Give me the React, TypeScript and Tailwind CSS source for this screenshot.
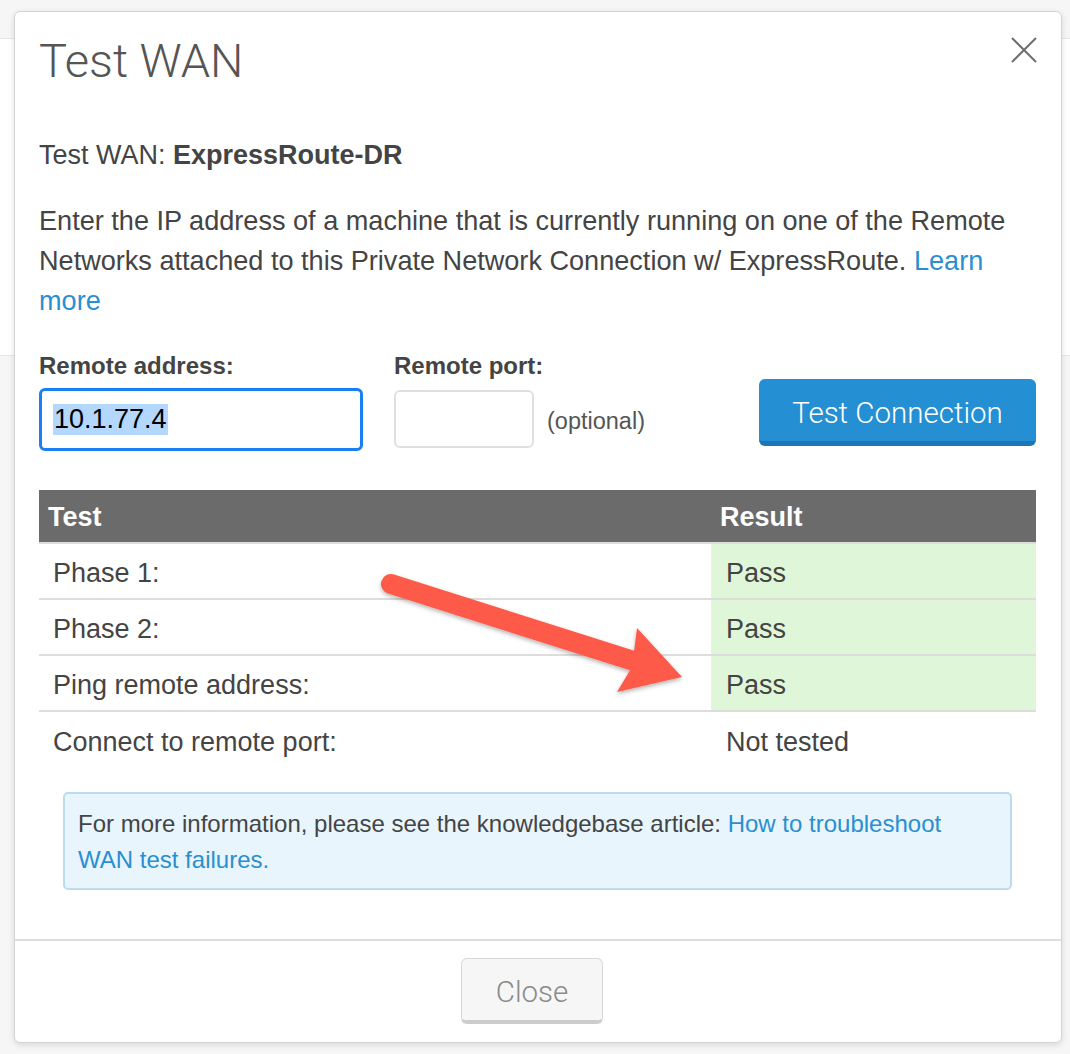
import React from "react";

const font = { fontFamily: '"Liberation Sans", Arial, sans-serif' };
const light = { fontFamily: 'Roboto, "Liberation Sans", sans-serif', fontWeight: 300 };

function Row({ label, result, pass, last }: { label: string; result: string; pass?: boolean; last?: boolean }) {
  return (
    <div className={`flex h-[56px] ${last ? "" : "border-b-2 border-[#dddddd]"}`}>
      <div className="w-[672px] pl-[14px] pt-[4px] flex items-center">{label}</div>
      <div className={`flex-1 pl-[15px] pt-[4px] flex items-center ${pass ? "bg-[#dff7d8]" : ""}`}>{result}</div>
    </div>
  );
}

export default function App() {
  return (
    <div className="relative w-[1070px] h-[1054px] bg-[#f6f6f6] overflow-hidden text-[#444444]" style={font}>
      <div className="absolute left-0 top-[38px] w-[14px] h-[318px] bg-white border-t border-b border-[#e6e6e6]" />
      <div className="absolute right-0 top-[38px] w-[10px] h-[318px] bg-white border-t border-b border-[#e6e6e6]" />
      <div className="pt-[11px] pl-[14px]">
        <div className="relative w-[1048px] h-[1032px] bg-white rounded-[6px] border border-[#d4d4d4] shadow-[0_2px_6px_rgba(0,0,0,0.12)] flex flex-col">
          <div className="flex justify-between items-start pl-[24px] pr-[24px] pt-[21px]">
            <div className="text-[47px] leading-[56px] text-[#555555]" style={light}>Test WAN</div>
            <svg width="26" height="26" viewBox="0 0 26 26" className="mt-[4px]">
              <path d="M1 1 L25 25 M25 1 L1 25" stroke="#6f6f6f" strokeWidth="2" />
            </svg>
          </div>
          <div className="pl-[24px] pr-[25px]">
            <div className="mt-[50px] text-[27px] leading-[32px]">
              Test WAN: <span className="font-bold">ExpressRoute-DR</span>
            </div>
            <div className="mt-[30px] pr-[22px] text-[27.1px] leading-[40px]">
              Enter the IP address of a machine that is currently running on one of the Remote Networks attached to this Private Network Connection w/ ExpressRoute.{" "}
              <span className="text-[#2a8fd0]">Learn more</span>
            </div>
            <div className="mt-[31px] flex items-start">
              <div className="flex flex-col">
                <div className="text-[24px] leading-[28px] font-bold">Remote address:</div>
                <div className="mt-[8px] w-[324px] h-[63px] rounded-[6px] border-[3px] border-[#1a7ef5] flex items-center pl-[11px]">
                  <span className="bg-[#b4d7fe] text-black text-[27px] leading-[31px] px-[1px]">10.1.77.4</span>
                </div>
              </div>
              <div className="flex flex-col ml-[31px]">
                <div className="text-[24px] leading-[28px] font-bold">Remote port:</div>
                <div className="flex items-center mt-[10px]">
                  <div className="w-[140px] h-[58px] rounded-[6px] border-2 border-[#e0e0e0]" />
                  <div className="ml-[13px] pt-[5px] text-[23.5px] text-[#555555]">(optional)</div>
                </div>
              </div>
              <div className="ml-auto mt-[27px] w-[277px] h-[67px] rounded-[6px] bg-[#2490d3] border-b-[5px] border-[#1c76b3] flex items-center justify-center pt-[6px] text-white text-[29.5px]" style={light}>
                Test Connection
              </div>
            </div>
            <div className="mt-[39px] text-[27px]">
              <div className="flex h-[54px] bg-[#6b6b6b] text-white font-bold border-b-2 border-[#dddddd]">
                <div className="w-[672px] pl-[9px] pt-[2px] flex items-center">Test</div>
                <div className="flex-1 pl-[9px] pt-[2px] flex items-center">Result</div>
              </div>
              <Row label="Phase 1:" result="Pass" pass />
              <Row label="Phase 2:" result="Pass" pass />
              <Row label="Ping remote address:" result="Pass" pass />
              <Row label="Connect to remote port:" result="Not tested" last />
            </div>
            <div className="mt-[24px] mx-[24px] h-[98px] rounded-[5px] border-2 border-[#bcdcee] bg-[#e8f5fd] pl-[13px] pr-[30px] pt-[12px] text-[24px] leading-[36px]">
              For more information, please see the knowledgebase article:{" "}
              <span className="text-[#2a8fd0]">How to troubleshoot WAN test failures.</span>
            </div>
          </div>
          <div className="mt-auto h-[103px] border-t-2 border-[#dddddd] pl-[446px] pt-[17px]">
            <div className="w-[142px] h-[66px] rounded-[6px] bg-[#f6f6f6] border border-[#d8d8d8] border-b-[4px] border-b-[#cccccc] flex items-center justify-center pt-[6px] text-[29.5px] text-[#8a8a8a]" style={light}>
              Close
            </div>
          </div>
        </div>
      </div>
      <svg className="absolute left-0 top-0 pointer-events-none" width="1070" height="1054" viewBox="0 0 1070 1054">
        <defs>
          <filter id="sh" x="-10%" y="-10%" width="120%" height="130%">
            <feDropShadow dx="0" dy="2" stdDeviation="2" floodColor="#000" floodOpacity="0.3" />
          </filter>
        </defs>
        <g filter="url(#sh)" fill="#fd5a4a">
          <line x1="391" y1="584" x2="640" y2="663" stroke="#fd5a4a" strokeWidth="20" strokeLinecap="round" />
          <polygon points="637,628 682,677 617,692 632,667" />
        </g>
      </svg>
    </div>
  );
}
